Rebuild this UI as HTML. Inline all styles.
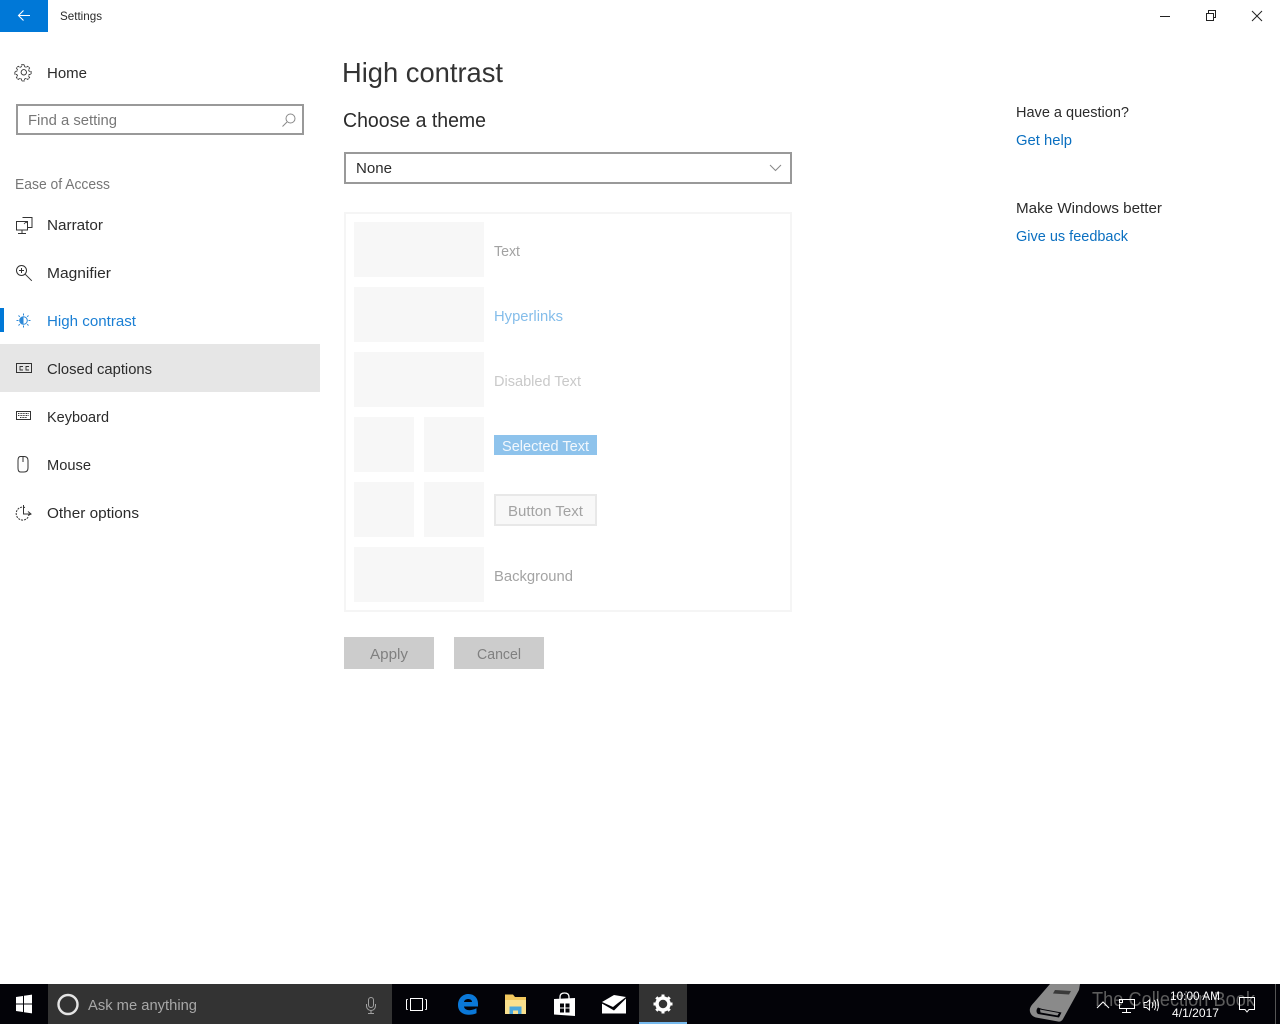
<!DOCTYPE html>
<html lang="en"><head><meta charset="utf-8"><title>Settings</title>
<style>
html,body{margin:0;padding:0;background:#fff;width:1280px;height:1024px;overflow:hidden}
svg{display:block}
text{font-family:"Liberation Sans",sans-serif;font-size:15px;fill:#2b2b2b}
.i{fill:none;stroke:#333;stroke-width:1}
</style></head><body>
<svg width="1280" height="1024" viewBox="0 0 1280 1024" xmlns="http://www.w3.org/2000/svg">
<rect width="1280" height="1024" fill="#fff"/>
<!-- title bar -->
<rect width="48" height="32" fill="#0078d7"/>
<path d="M18.500 15.500H30M23.500 10.500L18.500 15.500L23.500 20.500" fill="none" stroke="#fff" stroke-width="1.100"/>
<text x="60" y="20" style="font-size:12px" textLength="42" lengthAdjust="spacingAndGlyphs">Settings</text>
<path d="M1160 16.500H1170" stroke="#222" stroke-width="1"/>
<path d="M1206.500 13.500h7v7h-7zM1208.500 13v-2.500h7v7h-2" fill="none" stroke="#222"/>
<path d="M1252 11l10 10M1262 11l-10 10" stroke="#222" stroke-width="1"/>
<!-- sidebar -->
<g class="i" transform="translate(16 64.500)">
<circle cx="7.800" cy="7.800" r="2.700" stroke-width=".9"/>
<path d="M6.500 .5h3l.4 2.200 1.500.7 1.900-1.200 2 2-1.200 1.900.7 1.500 2.200.4v3l-2.200.4-.7 1.500 1.200 1.900-2 2-1.900-1.200-1.500.7-.4 2.200h-3l-.4-2.200-1.500-.7-1.900 1.200-2-2 1.200-1.900-.7-1.500-2.200-.4v-3l2.200-.4.7-1.500-1.200-1.900 2-2 1.900 1.200 1.500-.7z" transform="translate(-.2 -.2) scale(.9)" stroke-dasharray="3 .6"/>
</g>
<text x="47" y="78" textLength="40" lengthAdjust="spacingAndGlyphs">Home</text>
<rect x="17" y="105" width="286" height="29" fill="#fff" stroke="#999" stroke-width="2"/>
<text x="28" y="125" textLength="89" lengthAdjust="spacingAndGlyphs" style="fill:#777">Find a setting</text>
<g fill="none" stroke="#888"><circle cx="290.500" cy="118.500" r="4.500"/><path d="M287 122l-4.500 4.500"/></g>
<text x="15" y="189" textLength="95" lengthAdjust="spacingAndGlyphs" style="fill:#767676">Ease of Access</text>

<!-- narrator -->
<g class="i">
<path d="M22.500 217.500h9.500v10h-4M16.500 221.500h11v8.500h-11zM22 230v3.500M18 233.500h8"/>
<path d="M24 224l2-2 1 1" stroke-width=".8"/>
</g>
<text x="47" y="230" textLength="56" lengthAdjust="spacingAndGlyphs">Narrator</text>
<!-- magnifier -->
<g class="i"><circle cx="21.500" cy="270.500" r="5"/><path d="M25.300 274.300l6.500 6.500M19 270.500h5M21.500 268v5"/></g>
<text x="47" y="278" textLength="64" lengthAdjust="spacingAndGlyphs">Magnifier</text>
<!-- high contrast -->
<rect y="308" width="4" height="24" fill="#0078d7"/>
<g fill="none" stroke="#2b88d8"><circle cx="23.500" cy="320.500" r="3.800"/><path d="M23.500 313.500v2M23.500 325.500v2M16.500 320.500h2M28.500 320.500h2M18.500 315.500l1.300 1.300M27.200 324.200l1.300 1.300M28.500 315.500l-1.300 1.300M19.800 324.200l-1.300 1.300"/></g>
<path d="M23.500 317a3.500 3.500 0 0 0 0 7z" fill="#2b88d8"/>
<text x="47" y="326" textLength="89" lengthAdjust="spacingAndGlyphs" style="fill:#1a7fd4">High contrast</text>
<!-- closed captions -->
<rect y="344" width="320" height="48" fill="#e6e6e6"/>
<rect x="16.500" y="363.500" width="15" height="9" fill="none" stroke="#333"/>
<path d="M23 366.500h-3v3.500h3M29 366.500h-3v3.500h3" fill="none" stroke="#333" stroke-width=".9"/>
<text x="47" y="374" textLength="105" lengthAdjust="spacingAndGlyphs">Closed captions</text>
<!-- keyboard -->
<rect x="16.500" y="411.500" width="14" height="8" fill="none" stroke="#333"/>
<path d="M18 413.500h11M18 415.500h11M20 417.500h7" stroke="#333" stroke-width="1" stroke-dasharray="1 .6"/>
<text x="47" y="422" textLength="62" lengthAdjust="spacingAndGlyphs">Keyboard</text>
<!-- mouse -->
<path d="M20.500 456.500h3.500q4 0 4 4v7.500q0 4-4 4h-3.500q-2.500 0-2.500-4v-7.500q0-4 2.500-4zM23 457v5" class="i"/>
<text x="47" y="470" textLength="44" lengthAdjust="spacingAndGlyphs">Mouse</text>
<!-- other options -->
<g class="i"><path d="M25 507.500a6.500 6.500 0 1 0 3.500 9" stroke-dasharray="2 1"/><path d="M23.500 505v9h7M28 511.500l3 2.500-3 1.500"/></g>
<text x="47" y="518" textLength="92" lengthAdjust="spacingAndGlyphs">Other options</text>

<!-- main -->
<text x="342" y="82" style="font-size:28px;fill:#333" textLength="161" lengthAdjust="spacingAndGlyphs">High contrast</text>
<text x="343" y="127" style="font-size:20px;fill:#2b2b2b" textLength="143" lengthAdjust="spacingAndGlyphs">Choose a theme</text>
<rect x="345" y="153" width="446" height="30" fill="#fff" stroke="#999" stroke-width="2"/>
<text x="356" y="173" textLength="36" lengthAdjust="spacingAndGlyphs">None</text>
<path d="M770 165l5.500 5.500 5.500-5.500" fill="none" stroke="#888"/>

<rect x="345" y="213" width="446" height="398" fill="#fff" stroke="#f5f5f5" stroke-width="2"/>
<g fill="#f7f7f7">
<rect x="354" y="222" width="130" height="55"/>
<rect x="354" y="287" width="130" height="55"/>
<rect x="354" y="352" width="130" height="55"/>
<rect x="354" y="417" width="60" height="55"/>
<rect x="424" y="417" width="60" height="55"/>
<rect x="354" y="482" width="60" height="55"/>
<rect x="424" y="482" width="60" height="55"/>
<rect x="354" y="547" width="130" height="55"/>
</g>
<text x="494" y="256" textLength="26" lengthAdjust="spacingAndGlyphs" style="fill:#a3a3a3">Text</text>
<text x="494" y="321" textLength="69" lengthAdjust="spacingAndGlyphs" style="fill:#84bdea">Hyperlinks</text>
<text x="494" y="386" textLength="87" lengthAdjust="spacingAndGlyphs" style="fill:#c9c9c9">Disabled Text</text>
<rect x="494" y="435" width="103" height="20" fill="#8ec3ec"/>
<text x="502" y="451" textLength="87" lengthAdjust="spacingAndGlyphs" style="fill:#f2f8fd">Selected Text</text>
<rect x="495" y="495" width="101" height="30" fill="#f8f8f8" stroke="#e8e8e8" stroke-width="2"/>
<text x="508" y="516" textLength="75" lengthAdjust="spacingAndGlyphs" style="fill:#a3a3a3">Button Text</text>
<text x="494" y="581" textLength="79" lengthAdjust="spacingAndGlyphs" style="fill:#a3a3a3">Background</text>

<rect x="344" y="637" width="90" height="32" fill="#ccc"/>
<rect x="454" y="637" width="90" height="32" fill="#ccc"/>
<text x="370" y="659" textLength="38" lengthAdjust="spacingAndGlyphs" style="fill:#808080">Apply</text>
<text x="477" y="659" textLength="44" lengthAdjust="spacingAndGlyphs" style="fill:#808080">Cancel</text>

<!-- right column -->
<text x="1016" y="117" textLength="113" lengthAdjust="spacingAndGlyphs">Have a question?</text>
<text x="1016" y="145" textLength="56" lengthAdjust="spacingAndGlyphs" style="fill:#0a6fc0">Get help</text>
<text x="1016" y="213" textLength="146" lengthAdjust="spacingAndGlyphs">Make Windows better</text>
<text x="1016" y="241" textLength="112" lengthAdjust="spacingAndGlyphs" style="fill:#0a6fc0">Give us feedback</text>

<!-- taskbar -->
<rect y="984" width="1280" height="40" fill="#030308"/>
<path d="M16 997l7-1v7.500h-7zM24 995.800l8-1.200v8.900h-8zM16 1004.500h7v7.500l-7-1zM24 1004.500h8v8.900l-8-1.200z" fill="#fff"/>
<rect x="48" y="984" width="344" height="40" fill="#333"/>
<circle cx="68" cy="1004.500" r="9.500" fill="none" stroke="#e4e4e4" stroke-width="2.400"/>
<text x="88" y="1010" textLength="109" lengthAdjust="spacingAndGlyphs" style="fill:#a8a8a8">Ask me anything</text>
<g fill="none" stroke="#a0a0a0"><rect x="368.500" y="997.500" width="5" height="10" rx="2.500"/><path d="M366.500 1004v2a4.500 4.500 0 0 0 9 0v-2M371 1011v2.500M368 1013.500h6"/></g>
<!-- task view -->
<g fill="none" stroke="#fff"><rect x="410.500" y="998.500" width="12" height="12"/><path d="M406.500 1000v9M426.500 1000v9"/><path d="M406 999.500h2M406 1009.500h2M425 999.500h2M425 1009.500h2" stroke-width=".8"/></g>
<!-- edge -->
<path d="M458 1005c0-7 5-11 10.500-11 6 0 9.500 4.500 9.500 9.500v3h-14c.5 4 6.500 5 12.500 1.800v5c-7 3-18.500 2-18.500-8.300zm6-3h8c0-4-7.500-4-8 0z" fill="#0a78d8" fill-rule="evenodd"/>
<!-- explorer -->
<path d="M505 994.500h8l2 2.500h11v6.500h-21z" fill="#f2c85e"/>
<path d="M505 1000h21v14h-21z" fill="#f9e08e"/>
<path d="M509.500 1014v-7.500h12v7.500h-3.500v-3.500h-5v3.500z" fill="#4aa8dd"/>
<!-- store -->
<path d="M554 999l21-1v18l-21-1.500z" fill="#fff"/>
<path d="M560 1000v-3q0-4 4.500-4t4.500 4v3" fill="none" stroke="#fff" stroke-width="1.300"/>
<path d="M560 1003.500h4v4h-4zM565.500 1003.500h4v4h-4zM560 1008.500h4v4h-4zM565.500 1008.500h4v4h-4z" fill="#030308"/>
<!-- mail -->
<path d="M602 1002l12-7 12 2-8 6-5 4z" fill="#fff"/>
<path d="M602 1003.500v10h24v-15l-12 12z" fill="#fff"/>
<path d="M602 1003l11 5" stroke="#030308" stroke-width="1"/>
<!-- settings -->
<rect x="639" y="984" width="48" height="38" fill="#333"/>
<rect x="639" y="1022" width="48" height="2" fill="#76b9ed"/>
<circle cx="663" cy="1004" r="6" fill="none" stroke="#fff" stroke-width="3.500"/>
<path d="M663 994.500v3.500M663 1010v3.500M653.500 1004h3.500M669 1004h3.500M656.300 997.300l2.500 2.500M667.200 1008.200l2.500 2.500M669.700 997.300l-2.500 2.500M658.800 1008.200l-2.500 2.500" stroke="#fff" stroke-width="3"/>

<!-- watermark book -->
<path d="M1050 984h30l-1 6-16 29c-1 2-3 3-5 2.500l-22-4c-4-1-7-5-6-9 .5-2 2-4 4-6z" fill="#8a8a8a"/>
<path d="M1038 1007.500c-2 2-2 5 0 6.500l21 3.500 2.500-5-19-3.500c-2-.5-3-1-4.500-1.500z" fill="#030308"/>
<path d="M1040 1009.500l19 3.500-1.500 2.500-17-3z" fill="#8a8a8a"/>
<path d="M1055 990l16 1-2 3.500-16-1z" fill="#3a3a3a"/>
<text x="1092" y="1006" style="font-size:20px;fill:#5c5c5c" textLength="163" lengthAdjust="spacingAndGlyphs">The Collection Book</text>

<!-- tray -->
<path d="M1097 1008l6-6 6 6" fill="none" stroke="#fff"/>
<g fill="none" stroke="#fff"><path d="M1123 999.500h11.500v9h-15v-5M1126.500 1008.500v3.500M1122 1012.500h9"/><rect x="1119.500" y="999.500" width="3" height="3"/></g>
<g fill="none" stroke="#fff"><path d="M1144 1002.500h2.500l3-2.500v10l-3-2.500h-2.500zM1152 1002q1.500 3 0 6M1154.500 1000q2.500 5 0 10M1157 999q3 6 0 12" stroke-width=".9"/></g>
<text x="1170" y="1000" style="font-size:12px;fill:#fff" textLength="50" lengthAdjust="spacingAndGlyphs">10:00 AM</text>
<text x="1172" y="1017" style="font-size:12px;fill:#fff" textLength="47" lengthAdjust="spacingAndGlyphs">4/1/2017</text>
<path d="M1239.500 997.500h15v12h-5.500l-2 2.500-2-2.500h-5.500z" fill="none" stroke="#fff"/>
<rect x="1275" y="984" width="1" height="40" fill="#555"/>
</svg>
</body></html>
